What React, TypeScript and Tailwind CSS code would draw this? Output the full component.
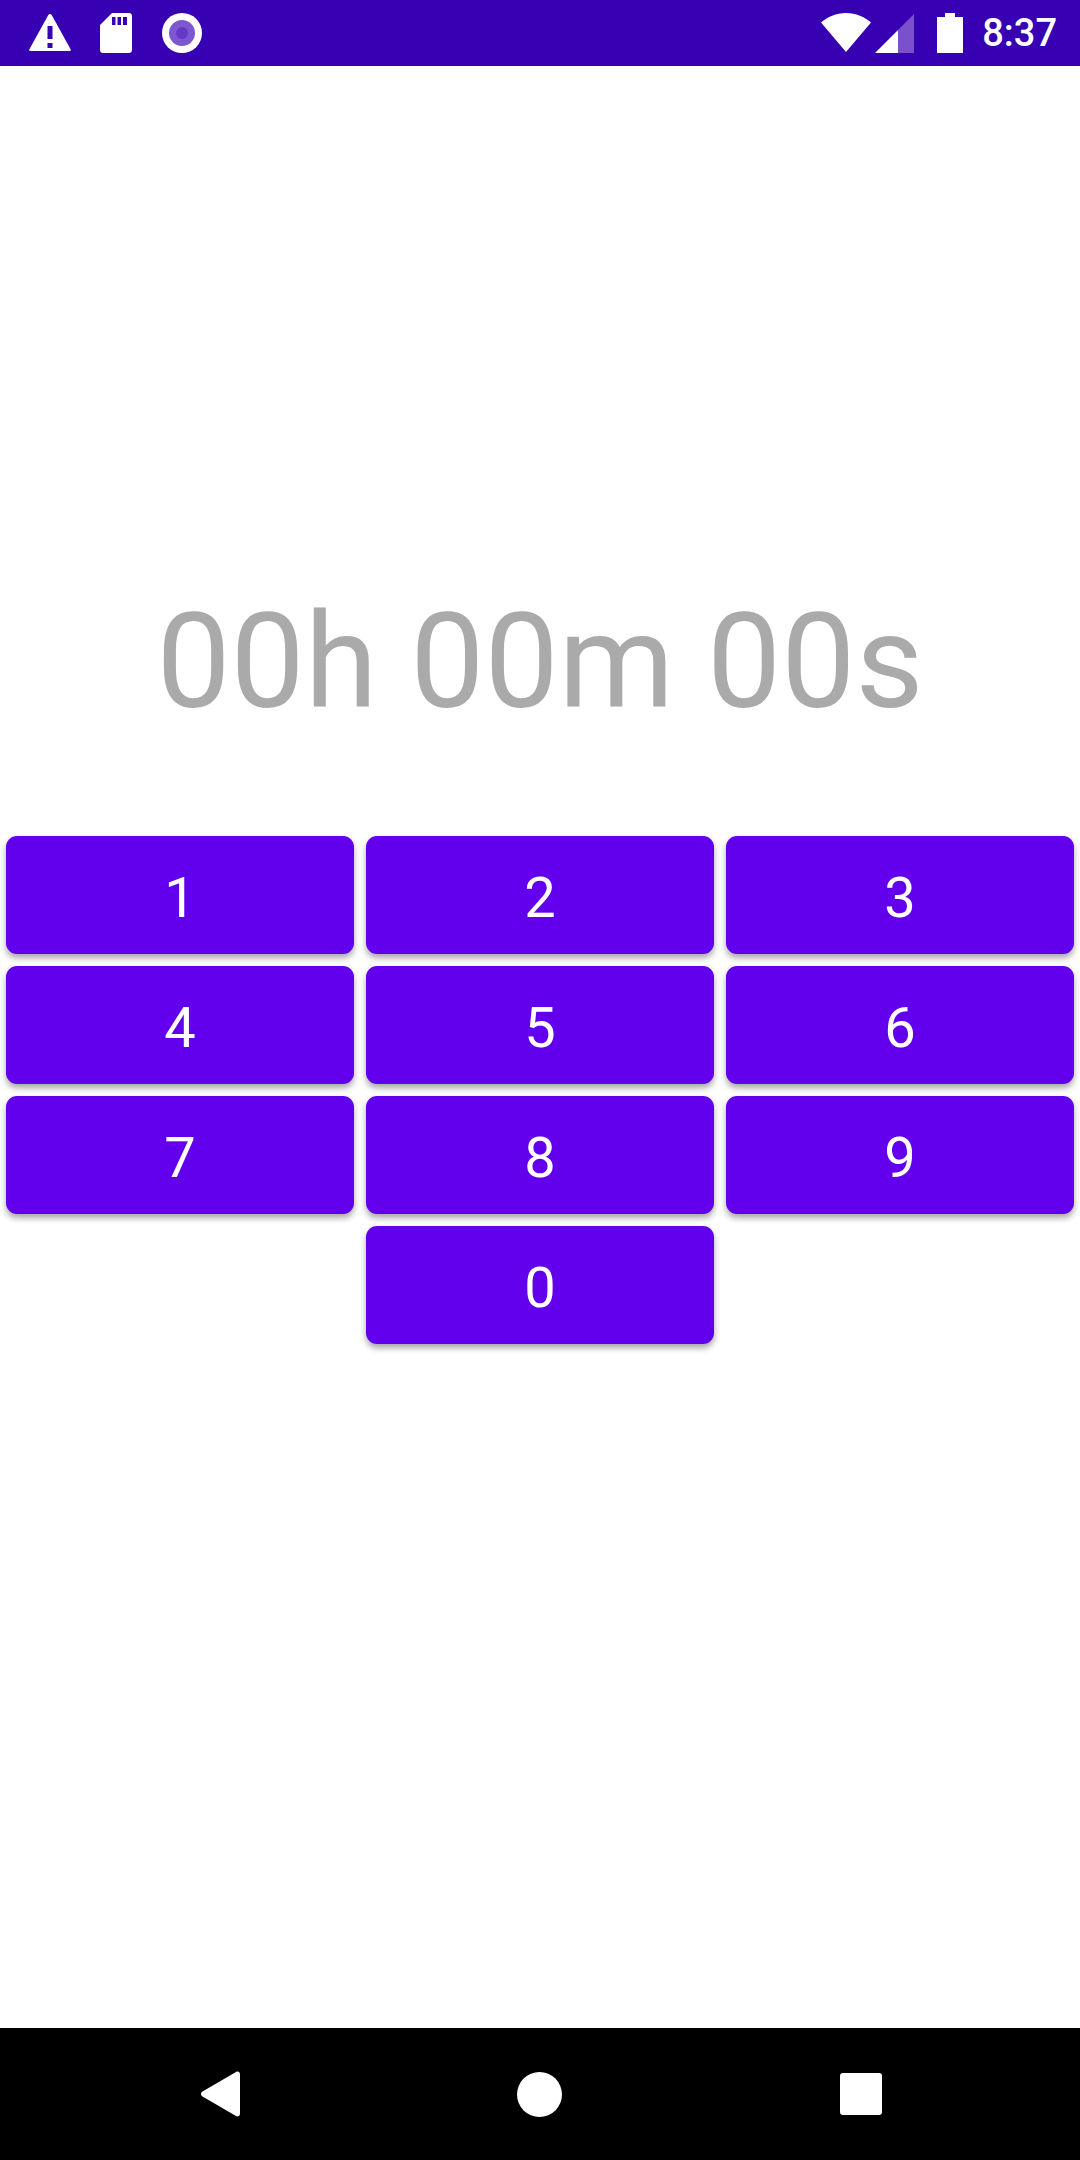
const keys = ["1", "2", "3", "4", "5", "6", "7", "8", "9"];

function KeyButton({ label }: { label: string }) {
  return (
    <button className="h-[118px] w-[348px] rounded-[11px] bg-[#6200ee] pt-[5px] text-[56px] leading-none text-white shadow-[0_4px_6px_rgba(0,0,0,0.35)]">
      {label}
    </button>
  );
}

function StatusBar() {
  return (
    <div className="flex h-[66px] items-center bg-[#3700b3] pl-[29px] pr-[23px]">
      <svg width="42" height="38" viewBox="0 0 42 38" className="mb-[1px]">
        <path
          fillRule="evenodd"
          fill="#fff"
          d="M19.3 1 .4 35.2c-.5 1 .1 1.8 1.1 1.8h39c1 0 1.6-.8 1.1-1.8L22.7 1c-.8-1.3-2.6-1.3-3.4 0ZM18.5 12h5v13h-5V12Zm0 17h5v5h-5v-5Z"
        />
      </svg>
      <svg width="32" height="40" viewBox="0 0 32 40" className="ml-[29px]">
        <path
          fillRule="evenodd"
          fill="#fff"
          d="M12 0h17c1.700 0 3 1.300 3 3v34c0 1.700-1.300 3-3 3H3c-1.700 0-3-1.300-3-3V12L12 0Zm0 4v8h3.500V4H12Zm5.500 0v8H21V4h-3.500ZM23 4v8h4V4h-4Z"
        />
      </svg>
      <svg width="40" height="40" viewBox="0 0 40 40" className="ml-[30px]">
        <circle cx="20" cy="20" r="20" fill="#fff" />
        <circle cx="20" cy="20" r="13" fill="#7d56d2" />
        <circle cx="20" cy="20" r="6" fill="#6538c6" />
      </svg>
      <svg width="50" height="40" viewBox="0 0 50 40" className="ml-auto">
        <path fill="#fff" d="M0 9.500C6.500 4 15 0 25 0s18.500 4 25 9.500L25 39 0 9.500Z" />
      </svg>
      <svg width="39" height="39" viewBox="0 0 39 39" className="ml-[4px]">
        <path fill="#7a50cc" d="M39 0v39H23V16L39 0Z" />
        <path fill="#fff" d="M23 16v23H0l23-23Z" />
      </svg>
      <svg width="26" height="40" viewBox="0 0 26 40" className="ml-[23px]">
        <path fill="#fff" d="M8 0h10v4h8v36H0V4h8V0Z" />
      </svg>
      <span className="ml-[19px] text-[38px] leading-none font-medium text-white">8:37</span>
    </div>
  );
}

function NavBar() {
  return (
    <div className="relative flex h-[132px] items-center bg-black">
      <svg width="40" height="46" viewBox="0 0 40 46" className="ml-[201px]">
        <path
          fill="#fff"
          d="M1.500 20.500 35 1c2-1.200 4 0 4 2.200v39.600c0 2.200-2 3.400-4 2.200L1.500 25.500c-2-1.200-2-3.800 0-5Z"
        />
      </svg>
      <div className="ml-[276px] h-[45px] w-[45px] rounded-full bg-white" />
      <div className="ml-[278px] h-[42px] w-[42px] rounded-[3px] bg-white" />
    </div>
  );
}

export default function App() {
  return (
    <div className="flex h-[2160px] w-[1080px] flex-col bg-white font-['Roboto',sans-serif]">
      <StatusBar />
      <div className="flex-1">
        <div className="pt-[519px] text-center text-[132px] leading-[154px] text-[#aaaaaa]">
          00h 00m 00s
        </div>
        <div className="mt-[97px] grid grid-cols-[348px_348px_348px] justify-center gap-x-[12px] gap-y-[12px]">
          {keys.map((k) => (
            <KeyButton key={k} label={k} />
          ))}
          <div className="col-start-2">
            <KeyButton label="0" />
          </div>
        </div>
      </div>
      <NavBar />
    </div>
  );
}
